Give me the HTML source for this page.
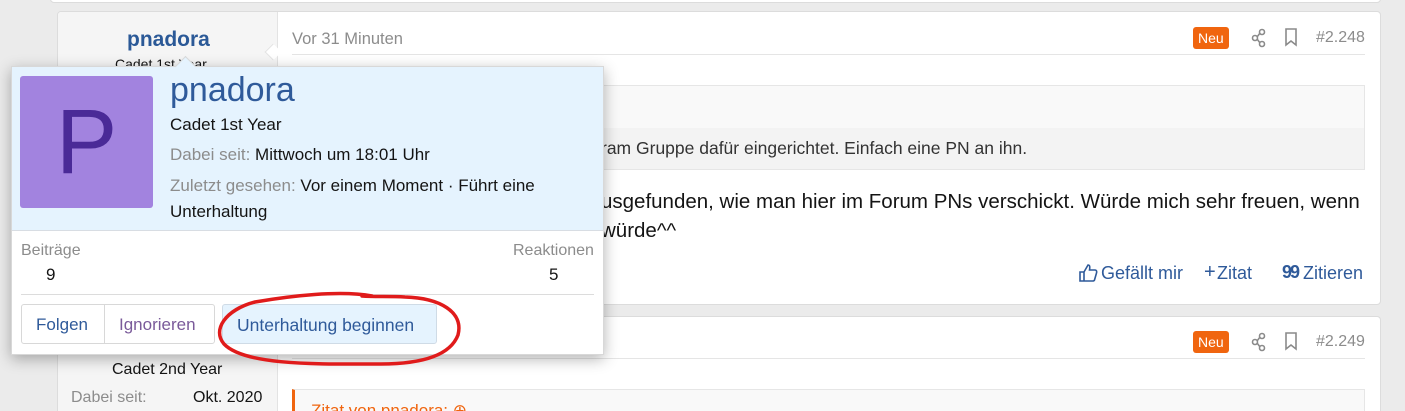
<!DOCTYPE html>
<html><head><meta charset="utf-8"><style>
*{box-sizing:border-box;margin:0;padding:0}
html,body{width:1405px;height:411px;overflow:hidden}
body{background:#ebebeb;font-family:"Liberation Sans",sans-serif;position:relative;color:#141414}
.abs{position:absolute}
.post{position:absolute;left:57px;width:1324px;background:#fff;border:1px solid #dcdcdc;border-radius:4px;overflow:hidden}
.lcol{position:absolute;left:0;top:0;bottom:0;width:220px;background:#f5f5f5;border-right:1px solid #e3e3e3}
.t{position:absolute;white-space:nowrap}
.neu{position:absolute;background:#f0650f;color:#fff;font-size:14px;padding:3px 5px;border-radius:3px;line-height:16px}
.g{color:#8c8c8c}
.blue{color:#2f5a9a}
</style></head><body>
<div class="abs" style="left:50px;top:-5px;width:1331px;height:8px;background:#fff;border:1px solid #dcdcdc;border-radius:4px"></div>

<!-- post 1 -->
<div class="post" style="top:11px;height:294px">
  <div class="lcol"></div>
  <div class="t" style="left:69px;top:16px;font-size:21px;font-weight:bold;color:#2b5997">pnadora</div>
  <div class="t" style="left:57px;top:44px;font-size:14px">Cadet 1st Year</div>
  <div class="t g" style="left:234px;top:18px;font-size:16.5px">Vor 31 Minuten</div>
  <div class="abs" style="left:234px;top:42px;width:1073px;height:1px;background:#e5e5e5"></div>
  <div class="neu" style="left:1135px;top:15px">Neu</div>
  <svg class="abs" style="left:1192px;top:16px" width="18" height="20" viewBox="0 0 18 20" fill="none" stroke="#8a8a8a" stroke-width="1.6"><circle cx="12" cy="4" r="2.5"/><circle cx="5" cy="10" r="2.5"/><circle cx="12" cy="16" r="2.5"/><path d="M7.2 8.8l2.7-3.5M7.2 11.2l2.7 3.5"/></svg>
  <svg class="abs" style="left:1226px;top:16px" width="14" height="19" viewBox="0 0 14 19" fill="none" stroke="#8a8a8a" stroke-width="1.6"><path d="M2 1h10v16l-5-4-5 4z"/></svg>
  <div class="t g" style="left:1258px;top:17px;font-size:16px">#2.248</div>
  <div class="abs" style="left:234px;top:73px;width:1073px;height:85px;background:#f9f9f9;border:1px solid #e6e6e6"></div>
  <div class="abs" style="left:235px;top:116px;width:1071px;height:41px;background:#f3f3f3"></div>
  <div class="t" style="left:543px;top:126px;font-size:17.5px;color:#333">ram Gruppe dafür eingerichtet. Einfach eine PN an ihn.</div>
  <div class="t" style="left:543px;top:175px;font-size:20.5px;line-height:29px">usgefunden, wie man hier im Forum PNs verschickt. Würde mich sehr freuen, wenn<br>würde^^</div>
  <svg class="abs" style="left:1020px;top:251px" width="20" height="20" viewBox="0 0 20 20" fill="none" stroke="#2f5a9a" stroke-width="1.6"><path d="M2 9h4v9H2zM6 9l4-7c2 0 2 2 1.5 5H17c1.5 0 2 1.5 1.5 3l-2 7c-.3 1-1 1-2 1H6"/></svg>
  <div class="t blue" style="left:1043px;top:251px;font-size:18px">Gefällt mir</div>
  <div class="t blue" style="left:1146px;top:249px;font-size:20px">+</div>
  <div class="t blue" style="left:1159px;top:251px;font-size:18px">Zitat</div>
  <div class="t blue" style="left:1224px;top:250px;font-size:18px;font-weight:bold;letter-spacing:-2px">99</div>
  <div class="t blue" style="left:1245px;top:251px;font-size:18px">Zitieren</div>
</div>
<!-- arrow post1 -->
<div class="abs" style="left:267px;top:46px;width:12px;height:12px;background:#fff;transform:rotate(45deg);border-left:1px solid #e3e3e3;border-bottom:1px solid #e3e3e3"></div>

<!-- post 2 -->
<div class="post" style="top:316px;height:95px;border-bottom:none;border-radius:4px 4px 0 0">
  <div class="lcol"></div>
  <div class="t" style="left:54px;top:44px;font-size:16px">Cadet 2nd Year</div>
  <div class="t g" style="left:13px;top:72px;font-size:16px">Dabei seit:</div>
  <div class="t" style="left:135px;top:72px;font-size:16px">Okt. 2020</div>
  <div class="neu" style="left:1135px;top:14px">Neu</div>
  <svg class="abs" style="left:1192px;top:15px" width="18" height="20" viewBox="0 0 18 20" fill="none" stroke="#8a8a8a" stroke-width="1.6"><circle cx="12" cy="4" r="2.5"/><circle cx="5" cy="10" r="2.5"/><circle cx="12" cy="16" r="2.5"/><path d="M7.2 8.8l2.7-3.5M7.2 11.2l2.7 3.5"/></svg>
  <svg class="abs" style="left:1226px;top:15px" width="14" height="19" viewBox="0 0 14 19" fill="none" stroke="#8a8a8a" stroke-width="1.6"><path d="M2 1h10v16l-5-4-5 4z"/></svg>
  <div class="t g" style="left:1258px;top:16px;font-size:16px">#2.249</div>
  <div class="abs" style="left:234px;top:41px;width:1073px;height:1px;background:#e5e5e5"></div>
  <div class="abs" style="left:234px;top:72px;width:1073px;height:60px;background:#f9f9f9;border:1px solid #e6e6e6;border-left:3px solid #f0650f"></div>
  <div class="t" style="left:253px;top:84px;font-size:17px;color:#f0650f">Zitat von pnadora: ⊕</div>
</div>

<!-- popup -->
<div class="abs" style="left:11px;top:66px;width:593px;height:289px;background:#fff;border:1px solid #d8d8d8;box-shadow:0 4px 14px rgba(0,0,0,.3)">
  <div class="abs" style="left:0;top:0;width:591px;height:164px;background:#e5f3fe;border-bottom:1px solid #d8dde3"></div>
  <div class="abs" style="left:8px;top:9px;width:133px;height:132px;background:#a283df;border-radius:3px;color:#4a2a97;font-size:92px;line-height:132px;text-align:center">P</div>
  <div class="t" style="left:158px;top:4px;font-size:34px;color:#2f5a9a">pnadora</div>
  <div class="t" style="left:158px;top:48px;font-size:17px">Cadet 1st Year</div>
  <div class="t" style="left:158px;top:78px;font-size:17px"><span class="g">Dabei seit:</span> Mittwoch um 18:01 Uhr</div>
  <div class="t" style="left:158px;top:106px;font-size:17px;line-height:26px;white-space:normal;width:430px"><span class="g">Zuletzt gesehen:</span> Vor einem Moment · Führt eine Unterhaltung</div>
  <div class="t g" style="left:9px;top:175px;font-size:16px">Beiträge</div>
  <div class="t" style="left:34px;top:198px;font-size:17px">9</div>
  <div class="t g" style="left:501px;top:175px;font-size:16px">Reaktionen</div>
  <div class="t" style="left:537px;top:198px;font-size:17px">5</div>
  <div class="abs" style="left:9px;top:227px;width:573px;height:1px;background:#dcdcdc"></div>
  <div class="abs" style="left:9px;top:237px;width:194px;height:40px;border:1px solid #d8d8d8;border-radius:3px;background:#fff"></div>
  <div class="abs" style="left:92px;top:237px;width:1px;height:40px;background:#d8d8d8"></div>
  <div class="t blue" style="left:24px;top:248px;font-size:17px">Folgen</div>
  <div class="t" style="left:107px;top:248px;font-size:17px;color:#7a5a9a">Ignorieren</div>
  <div class="abs" style="left:210px;top:237px;width:215px;height:40px;border:1px solid #cfdbe6;border-radius:3px;background:#e5f3fe"></div>
  <div class="t blue" style="left:225px;top:248px;font-size:17.5px">Unterhaltung beginnen</div>
</div>
<!-- popup arrow -->
<div class="abs" style="left:178px;top:59px;width:15px;height:15px;background:#e5f3fe;transform:rotate(45deg);border-left:1px solid #d8d8d8;border-top:1px solid #d8d8d8"></div>

<svg class="abs" style="left:0;top:0" width="1405" height="411" viewBox="0 0 1405 411" fill="none">
<path d="M372 296 C340 290 290 296 255 302 C225 310 212 330 224 344 C245 366 320 364 380 364 C420 364 450 356 458 335 C464 312 440 298 405 297 C390 296 375 297 362 296" stroke="#e01b1b" stroke-width="3.5" stroke-linecap="round"/>
</svg>
</body></html>
